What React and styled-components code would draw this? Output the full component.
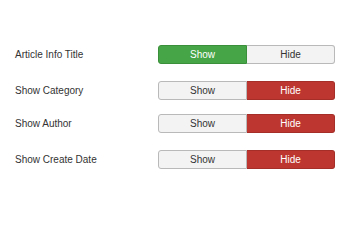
import React from "react";
import styled, { createGlobalStyle } from "styled-components";

const Global = createGlobalStyle`
  body {
    margin: 0;
    background: #fff;
    font-family: "Liberation Sans", Arial, sans-serif;
  }
`;

const Form = styled.div`
  padding: 45px 15px 0 15px;
  display: flex;
  flex-direction: column;
`;

const Row = styled.div`
  display: flex;
  align-items: center;
  margin-bottom: ${(p) => p.gap}px;
`;

const Label = styled.div`
  width: 143px;
  font-size: 10px;
  color: #333;
`;

const Group = styled.div`
  display: flex;
  width: 177px;
`;

const Btn = styled.div`
  flex: 1;
  height: 17px;
  display: flex;
  align-items: center;
  justify-content: center;
  font-size: 10px;
  border: 1px solid #b9b9b9;
  background: #f3f3f3;
  color: #333;
  &:first-child {
    border-radius: 3px 0 0 3px;
  }
  &:last-child {
    border-left: none;
    border-radius: 0 3px 3px 0;
  }
  ${(p) =>
    p.on === "show" &&
    `
    background: #46a546;
    border-color: #3a8f3a;
    color: #fff;
  `}
  ${(p) =>
    p.on === "hide" &&
    `
    background: #bd362f;
    border-color: #a52e28;
    color: #fff;
  `}
`;

const rows = [
  { label: "Article Info Title", value: "show", gap: 17 },
  { label: "Show Category", value: "hide", gap: 14 },
  { label: "Show Author", value: "hide", gap: 17 },
  { label: "Show Create Date", value: "hide", gap: 0 },
];

export default function App() {
  return (
    <>
      <Global />
      <Form>
        {rows.map((r) => (
          <Row key={r.label} gap={r.gap}>
            <Label>{r.label}</Label>
            <Group>
              <Btn on={r.value === "show" ? "show" : null}>Show</Btn>
              <Btn on={r.value === "hide" ? "hide" : null}>Hide</Btn>
            </Group>
          </Row>
        ))}
      </Form>
    </>
  );
}
